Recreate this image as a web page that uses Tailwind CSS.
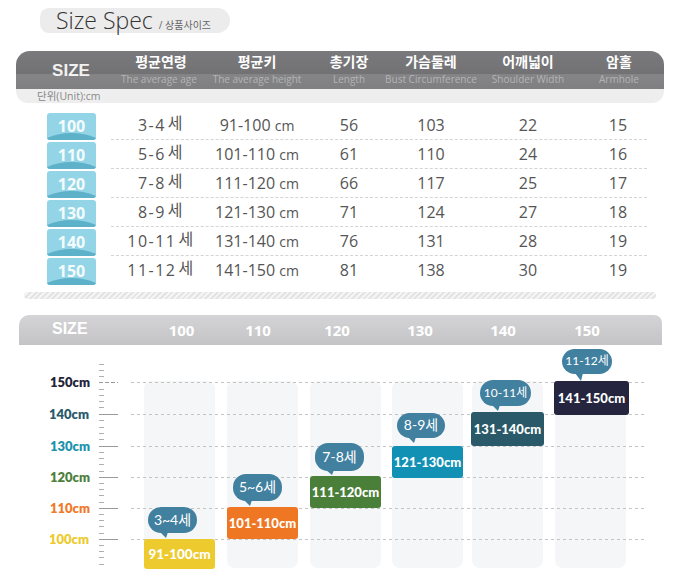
<!DOCTYPE html>
<html lang="en">

<head>
  <meta charset="UTF-8">
  <title>Size Spec</title>
  <script src="https://cdn.jsdelivr.net/npm/@tailwindcss/browser@4"></script>
</head>

<body class="bg-white w-[680px] h-[579px] overflow-hidden font-['Open_Sans','Noto_Sans_CJK_KR',sans-serif] text-[#555]">
  <!-- title -->
  <div class="pt-2 pl-10 h-[51px]">
    <div class="flex items-baseline w-[190px] h-[25px] pl-4 bg-[#ececec] rounded-l-[10px] rounded-r-[14px] leading-[25px] whitespace-nowrap">
      <span class="text-[23px] font-light text-[#333]">Size Spec</span>
      <span class="ml-[6px] text-[10px] text-[#666]">/ 상품사이즈</span>
    </div>
  </div>

  <!-- spec table head -->
  <div class="mx-4 w-[648px] h-[52px] rounded-t-[14px] rounded-b-[12px] bg-[#eeeeef] overflow-hidden">
    <div class="grid grid-cols-[110px_70px_122px_62px_102px_92px_90px] h-[38px] bg-[linear-gradient(#7a7a7c_0,#727274_60%,#858587_62%,#7f7f81_100%)] text-center">
      <div class="text-[17px] font-bold text-white/90 leading-[40px] font-['Liberation_Sans']">SIZE</div>
      <div class="pt-[2px]"><p class="text-[14px] font-bold text-white leading-[17px]">평균연령</p><p class="relative -left-[5px] text-[10px] text-white/40 leading-[18px] whitespace-nowrap">The average age</p></div>
      <div class="pt-[2px]"><p class="text-[14px] font-bold text-white leading-[17px]">평균키</p><p class="text-[10px] text-white/40 leading-[18px] whitespace-nowrap">The average height</p></div>
      <div class="pt-[2px]"><p class="text-[14px] font-bold text-white leading-[17px]">총기장</p><p class="text-[10px] text-white/40 leading-[18px] whitespace-nowrap">Length</p></div>
      <div class="pt-[2px]"><p class="text-[14px] font-bold text-white leading-[17px]">가슴둘레</p><p class="text-[10px] text-white/40 leading-[18px] whitespace-nowrap">Bust Circumference</p></div>
      <div class="pt-[2px]"><p class="text-[14px] font-bold text-white leading-[17px]">어깨넓이</p><p class="text-[10px] text-white/40 leading-[18px] whitespace-nowrap">Shoulder Width</p></div>
      <div class="pt-[2px]"><p class="text-[14px] font-bold text-white leading-[17px]">암홀</p><p class="text-[10px] text-white/40 leading-[18px] whitespace-nowrap">Armhole</p></div>
    </div>
    <div class="pl-[21px] text-[10.5px] leading-[14px] text-[#888]">단위(Unit):cm</div>
  </div>

  <!-- spec table rows -->
  <div class="mt-[10px] ml-[47px] flex flex-col gap-[2px]">
    <div class="flex h-[27px]">
      <div class="relative w-[49px] h-[27px] rounded-[3px] bg-[#93d5e6] overflow-hidden text-center text-[16px] font-bold leading-[26px] text-white/90"><svg class="absolute left-0 top-0" width="49" height="27"><path d="M0 27V25Q12 20 24 20Q38 20 49 25V27Z" fill="#5db1c9"/></svg><span class="relative">100</span></div>
      <div class="ml-[15px] w-[536px] grid grid-cols-[100px_92px_92px_72px_122px_58px] h-[27px] border-b border-dashed border-[#d4d4d4] text-center text-[16px] leading-[25px]">
        <div class="tracking-[1.5px]">3-4<span class="relative -top-[2px] ml-[2px] text-[16px]">세</span></div>
        <div class="whitespace-nowrap">91-100 <span class="text-[14px]">cm</span></div><div>56</div><div>103</div><div>22</div><div>15</div>
      </div>
    </div>
    <div class="flex h-[27px]">
      <div class="relative w-[49px] h-[27px] rounded-[3px] bg-[#93d5e6] overflow-hidden text-center text-[16px] font-bold leading-[26px] text-white/90"><svg class="absolute left-0 top-0" width="49" height="27"><path d="M0 27V25Q12 20 24 20Q38 20 49 25V27Z" fill="#5db1c9"/></svg><span class="relative">110</span></div>
      <div class="ml-[15px] w-[536px] grid grid-cols-[100px_92px_92px_72px_122px_58px] h-[27px] border-b border-dashed border-[#d4d4d4] text-center text-[16px] leading-[25px]">
        <div class="tracking-[1.5px]">5-6<span class="relative -top-[2px] ml-[2px] text-[16px]">세</span></div>
        <div class="whitespace-nowrap">101-110 <span class="text-[14px]">cm</span></div><div>61</div><div>110</div><div>24</div><div>16</div>
      </div>
    </div>
    <div class="flex h-[27px]">
      <div class="relative w-[49px] h-[27px] rounded-[3px] bg-[#93d5e6] overflow-hidden text-center text-[16px] font-bold leading-[26px] text-white/90"><svg class="absolute left-0 top-0" width="49" height="27"><path d="M0 27V25Q12 20 24 20Q38 20 49 25V27Z" fill="#5db1c9"/></svg><span class="relative">120</span></div>
      <div class="ml-[15px] w-[536px] grid grid-cols-[100px_92px_92px_72px_122px_58px] h-[27px] border-b border-dashed border-[#d4d4d4] text-center text-[16px] leading-[25px]">
        <div class="tracking-[1.5px]">7-8<span class="relative -top-[2px] ml-[2px] text-[16px]">세</span></div>
        <div class="whitespace-nowrap">111-120 <span class="text-[14px]">cm</span></div><div>66</div><div>117</div><div>25</div><div>17</div>
      </div>
    </div>
    <div class="flex h-[27px]">
      <div class="relative w-[49px] h-[27px] rounded-[3px] bg-[#93d5e6] overflow-hidden text-center text-[16px] font-bold leading-[26px] text-white/90"><svg class="absolute left-0 top-0" width="49" height="27"><path d="M0 27V25Q12 20 24 20Q38 20 49 25V27Z" fill="#5db1c9"/></svg><span class="relative">130</span></div>
      <div class="ml-[15px] w-[536px] grid grid-cols-[100px_92px_92px_72px_122px_58px] h-[27px] border-b border-dashed border-[#d4d4d4] text-center text-[16px] leading-[25px]">
        <div class="tracking-[1.5px]">8-9<span class="relative -top-[2px] ml-[2px] text-[16px]">세</span></div>
        <div class="whitespace-nowrap">121-130 <span class="text-[14px]">cm</span></div><div>71</div><div>124</div><div>27</div><div>18</div>
      </div>
    </div>
    <div class="flex h-[27px]">
      <div class="relative w-[49px] h-[27px] rounded-[3px] bg-[#93d5e6] overflow-hidden text-center text-[16px] font-bold leading-[26px] text-white/90"><svg class="absolute left-0 top-0" width="49" height="27"><path d="M0 27V25Q12 20 24 20Q38 20 49 25V27Z" fill="#5db1c9"/></svg><span class="relative">140</span></div>
      <div class="ml-[15px] w-[536px] grid grid-cols-[100px_92px_92px_72px_122px_58px] h-[27px] border-b border-dashed border-[#d4d4d4] text-center text-[16px] leading-[25px]">
        <div class="tracking-[1.5px]">10-11<span class="relative -top-[2px] ml-[2px] text-[16px]">세</span></div>
        <div class="whitespace-nowrap">131-140 <span class="text-[14px]">cm</span></div><div>76</div><div>131</div><div>28</div><div>19</div>
      </div>
    </div>
    <div class="flex h-[27px]">
      <div class="relative w-[49px] h-[27px] rounded-[3px] bg-[#93d5e6] overflow-hidden text-center text-[16px] font-bold leading-[26px] text-white/90"><svg class="absolute left-0 top-0" width="49" height="27"><path d="M0 27V25Q12 20 24 20Q38 20 49 25V27Z" fill="#5db1c9"/></svg><span class="relative">150</span></div>
      <div class="ml-[15px] w-[536px] grid grid-cols-[100px_92px_92px_72px_122px_58px] h-[27px] text-center text-[16px] leading-[25px]">
        <div class="tracking-[1.5px]">11-12<span class="relative -top-[2px] ml-[2px] text-[16px]">세</span></div>
        <div class="whitespace-nowrap">141-150 <span class="text-[14px]">cm</span></div><div>81</div><div>138</div><div>30</div><div>19</div>
      </div>
    </div>
  </div>

  <!-- hatched divider -->
  <div class="mt-[7px] ml-6 w-[632px] h-[7px] rounded-full bg-[repeating-linear-gradient(135deg,#e4e4e4_0,#e4e4e4_2px,#f4f4f4_2px,#f4f4f4_4px)]"></div>

  <!-- chart head -->
  <div class="mt-[16px] ml-[19px] w-[643px] h-[30px] rounded-tl-[10px] rounded-tr-[8px] bg-[linear-gradient(#d4d4d6,#c4c4c6)] relative font-bold text-white">
    <span class="absolute left-[33px] top-[3px] text-[16px] leading-[22px] font-['Liberation_Sans']">SIZE</span>
    <div class="grid grid-cols-[83px_70px_88px_78px_88px_80px] ml-[121px] pt-[5px] text-center text-[15px] leading-[20px]">
      <span>100</span><span>110</span><span>120</span><span>130</span><span>140</span><span>150</span>
    </div>
  </div>

  <!-- height chart: 0,0 is page y 344 -->
  <div class="relative w-[680px] h-[235px] font-['Lato','Noto_Sans_CJK_KR',sans-serif]">
    <div class="absolute left-[144px] top-[36px] w-[71px] h-[187px] rounded-[8px] bg-[#f5f6f8]"></div>
    <div class="absolute left-[227px] top-[36px] w-[71px] h-[187px] rounded-[8px] bg-[#f5f6f8]"></div>
    <div class="absolute left-[310px] top-[36px] w-[71px] h-[187px] rounded-[8px] bg-[#f5f6f8]"></div>
    <div class="absolute left-[392px] top-[36px] w-[71px] h-[187px] rounded-[8px] bg-[#f5f6f8]"></div>
    <div class="absolute left-[472px] top-[36px] w-[71px] h-[187px] rounded-[8px] bg-[#f5f6f8]"></div>
    <div class="absolute left-[555px] top-[36px] w-[71px] h-[187px] rounded-[8px] bg-[#f5f6f8]"></div>

    <svg class="absolute left-0 top-0" width="680" height="235" fill="none">
      <path d="M131 37.5H645M131 69.5H645M131 101.5H645M131 132.5H645M131 163.5H645M131 194.5H645" stroke="#c4c4c4" stroke-dasharray="3 3"/>
      <path d="M99 69.5H118M99 101.5H118M99 132.5H118M99 163.5H118M99 194.5H118" stroke="#9a9a9a"/>
      <path d="M99 37.5H118" stroke="#9a9a9a" stroke-dasharray="4 2"/>
      <path d="M99 19.5h5M99 25.5h5M99 31.5h5M99 44.5h5M99 50.5h5M99 56.5h5M99 62.5h5M99 75.5h5M99 82.5h5M99 88.5h5M99 94.5h5M99 107.5h5M99 113.5h5M99 119.5h5M99 126.5h5M99 138.5h5M99 144.5h5M99 150.5h5M99 157.5h5M99 169.5h5M99 175.5h5M99 181.5h5M99 188.5h5M99 200.5h5M99 206.5h5M99 212.5h5M99 219.5h5" stroke="#b0b0b0"/>
    </svg>

    <span class="absolute left-[50px] top-[29px] text-[13px] leading-[16px] font-extrabold text-[#23233a]">150cm</span>
    <span class="absolute left-[49px] top-[61px] text-[13px] leading-[16px] font-extrabold text-[#2a5a6c]">140cm</span>
    <span class="absolute left-[50px] top-[93px] text-[13px] leading-[16px] font-extrabold text-[#1c93ad]">130cm</span>
    <span class="absolute left-[50px] top-[124px] text-[13px] leading-[16px] font-extrabold text-[#4d7f3d]">120cm</span>
    <span class="absolute left-[50px] top-[155px] text-[13px] leading-[16px] font-extrabold text-[#ef7a2a]">110cm</span>
    <span class="absolute left-[49px] top-[186px] text-[13px] leading-[16px] font-extrabold text-[#eccb2f]">100cm</span>

    <div class="absolute left-[144px] top-[194px] w-[71px] h-[30px] rounded-[3px] bg-[#edcb2e] text-center text-[13.5px] font-black leading-[30px] text-white whitespace-nowrap">91-100cm</div>
    <div class="absolute left-[227px] top-[162px] w-[71px] h-[32px] rounded-[3px] bg-[#ef7622] text-center text-[13px] font-black leading-[32px] text-white whitespace-nowrap">101-110cm</div>
    <div class="absolute left-[310px] top-[131px] w-[71px] h-[32px] rounded-[3px] bg-[#4a7f39] text-center text-[13px] font-black leading-[32px] text-white whitespace-nowrap">111-120cm</div>
    <div class="absolute left-[392px] top-[101px] w-[71px] h-[32px] rounded-[3px] bg-[#1291b5] text-center text-[13px] font-black leading-[32px] text-white whitespace-nowrap">121-130cm</div>
    <div class="absolute left-[471px] top-[67px] w-[73px] h-[34px] rounded-[3px] bg-[#2a5a6a] text-center text-[13px] font-black leading-[34px] text-white whitespace-nowrap">131-140cm</div>
    <div class="absolute left-[554px] top-[36px] w-[75px] h-[34px] rounded-[3px] bg-[#25253f] text-center text-[13px] font-black leading-[34px] text-white whitespace-nowrap">141-150cm</div>

    <div class="absolute left-[148px] top-[162px] w-[49px] h-[26px] rounded-[13px] bg-[#41809f] text-center text-[14px] leading-[25px] text-white whitespace-nowrap">3~4세</div>
    <svg class="absolute left-[160px] top-[187px]" width="8" height="6"><path d="M0 0H8L6 6Z" fill="#41809f"/></svg>
    <div class="absolute left-[233px] top-[129px] w-[49px] h-[27px] rounded-[13px] bg-[#41809f] text-center text-[14px] leading-[26px] text-white whitespace-nowrap">5~6세</div>
    <svg class="absolute left-[244px] top-[155px]" width="8" height="6"><path d="M0 0H8L6 6Z" fill="#41809f"/></svg>
    <div class="absolute left-[315px] top-[98px] w-[49px] h-[28px] rounded-[13px] bg-[#41809f] text-center text-[14px] leading-[27px] text-white whitespace-nowrap">7-8세</div>
    <svg class="absolute left-[326px] top-[125px]" width="8" height="5"><path d="M0 0H8L6 5Z" fill="#41809f"/></svg>
    <div class="absolute left-[397px] top-[68px] w-[48px] h-[25px] rounded-[13px] bg-[#41809f] text-center text-[14px] leading-[24px] text-white whitespace-nowrap">8-9세</div>
    <svg class="absolute left-[408px] top-[92px]" width="8" height="6"><path d="M0 0H8L6 6Z" fill="#41809f"/></svg>
    <div class="absolute left-[480px] top-[35px] w-[51px] h-[26px] rounded-[13px] bg-[#41809f] text-center text-[12px] leading-[25px] text-white whitespace-nowrap">10-11세</div>
    <svg class="absolute left-[492px] top-[60px]" width="8" height="6"><path d="M0 0H8L6 6Z" fill="#41809f"/></svg>
    <div class="absolute left-[562px] top-[4px] w-[50px] h-[25px] rounded-[13px] bg-[#41809f] text-center text-[12px] leading-[24px] text-white whitespace-nowrap">11-12세</div>
    <svg class="absolute left-[575px] top-[28px]" width="8" height="8"><path d="M0 0H8L6 8Z" fill="#41809f"/></svg>
  </div>
</body>

</html>
